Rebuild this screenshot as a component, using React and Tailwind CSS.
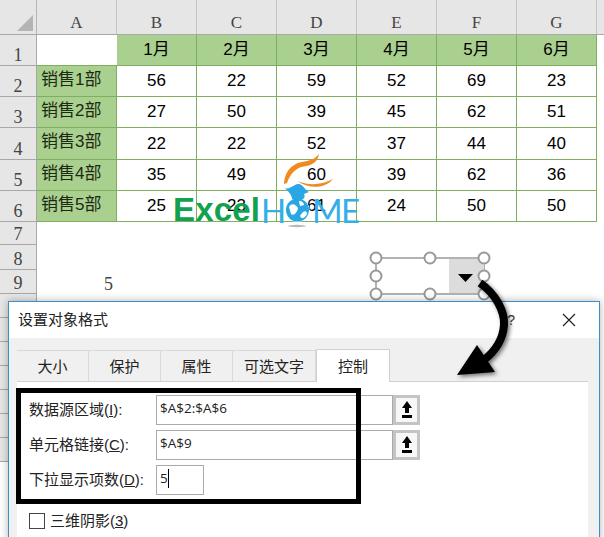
import React from 'react';

const months = ['1月', '2月', '3月', '4月', '5月', '6月'];
const rows = [
  ['销售1部', 56, 22, 59, 52, 69, 23],
  ['销售2部', 27, 50, 39, 45, 62, 51],
  ['销售3部', 22, 22, 52, 37, 44, 40],
  ['销售4部', 35, 49, 60, 39, 62, 36],
  ['销售5部', 25, 23, 61, 24, 50, 50],
];
const colLetters = ['A', 'B', 'C', 'D', 'E', 'F', 'G'];
const heights = ['h-[31px]', 'h-[31px]', 'h-[31px]', 'h-[32px]', 'h-[31px]', 'h-[31px]'];
const cjk = 'font-["Liberation_Sans","Noto_Sans_CJK_SC",sans-serif]';

const RowHead = ({ n, className }) => (
  <div className={`w-[37px] shrink-0 bg-[#e6e6e6] border-r border-b border-[#a8a8a8] flex items-end justify-center pb-[1px] leading-[18px] text-[18px] text-[#444] font-["Liberation_Serif",serif] ${className}`}>
    {n}
  </div>
);

const Cell = ({ children, className = '' }) => (
  <div className={`w-[80px] shrink-0 border-r border-b border-[#7fae5f] flex items-center justify-center text-[17px] text-black ${className}`}>
    {children}
  </div>
);

const EmptyRow = ({ n, h, children }) => (
  <div className={`flex ${h}`}>
    <RowHead n={n} className={h} />
    <div className="w-[80px] shrink-0 flex items-end justify-end pr-[4px] pb-[1px] leading-[18px] text-[18px] text-[#444] font-['Liberation_Serif',serif]">
      {children}
    </div>
  </div>
);

const Sheet = () => (
  <div className={`flex flex-col ${cjk}`}>
    <div className="flex h-[35px] bg-[#e6e6e6] border-b border-[#a8a8a8]">
      <div className="w-[37px] shrink-0 border-r border-[#b5b5b5] relative">
        <div className="absolute right-[3px] bottom-[3px] w-0 h-0 border-l-[16px] border-l-transparent border-b-[16px] border-b-[#b4b4b4]"></div>
      </div>
      {colLetters.map((c) => (
        <div key={c} className="w-[80px] shrink-0 border-r border-[#c4c4c4] flex items-end justify-center pb-[2px] leading-[18px] text-[17px] text-[#444] font-['Liberation_Serif',serif]">
          {c}
        </div>
      ))}
    </div>
    <div className={`flex ${heights[0]}`}>
      <RowHead n={1} className={heights[0]} />
      <div className="w-[80px] shrink-0 border-b border-[#7fae5f]"></div>
      {months.map((m) => (
        <Cell key={m} className="bg-[#a9d08e] text-[#111]">{m}</Cell>
      ))}
    </div>
    {rows.map((row, r) => (
      <div key={row[0]} className={`flex ${heights[r + 1]}`}>
        <RowHead n={r + 2} className={heights[r + 1]} />
        <div className="w-[80px] shrink-0 bg-[#a9d08e] border-r border-b border-[#7fae5f] flex items-center pl-[4px] pb-[3px] text-[17px] text-[#1c2a14]">
          {row[0]}
        </div>
        {row.slice(1).map((v, i) => (
          <Cell key={i}>{v}</Cell>
        ))}
      </div>
    ))}
    <EmptyRow n={7} h="h-[23px]" />
    <EmptyRow n={8} h="h-[25px]" />
    <EmptyRow n={9} h="h-[24px]">5</EmptyRow>
    <EmptyRow h="h-[24px]" />
    <EmptyRow h="h-[24px]" />
    <EmptyRow h="h-[24px]" />
    <EmptyRow h="h-[24px]" />
    <EmptyRow h="h-[24px]" />
    <EmptyRow h="h-[24px]" />
    <EmptyRow h="h-[24px]" />
  </div>
);

const Logo = () => (
  <div className="absolute left-[170px] top-[150px] w-[195px] h-[85px]">
    <span className="absolute left-[3px] top-[41px] leading-[38px] text-[33px] font-bold text-[#12a150] tracking-[0.2px] font-['Liberation_Sans',sans-serif]">Excel</span>
    <span className="absolute left-[91px] top-[41px] leading-[38px] text-[33px] text-[#35aee8] font-['Lato',sans-serif]">H</span>
    <span className="absolute left-[142px] top-[41px] leading-[38px] text-[33px] text-[#35aee8] font-['Lato',sans-serif]">M</span>
    <span className="absolute left-[171px] top-[41px] leading-[38px] text-[33px] text-[#35aee8] font-['Lato',sans-serif]">E</span>
    <svg className="absolute inset-0" width="195" height="85" viewBox="0 0 195 85">
      <path d="M114 34 C114 24 120 14 132 12 C138 11 144 10 149 4 C148 10 144 15 136 16 C126 17 120 24 117 33 Z" fill="#f08a1d" />
      <path d="M127 31 C137 35 150 36 163 29 C155 39 139 39 127 31 Z" fill="#f08a1d" />
      <circle cx="127.5" cy="60" r="12" fill="#ffffff" />
      <circle cx="127.5" cy="60" r="11.5" fill="#29a6e4" />
      <path d="M115 38 C120 40 124 34 128 34 C132 33 135 40 139 42 L134 44 C136 48 133 50 128 50 L122 49 C122 45 118 41 115 38 Z" fill="#29a6e4" />
      <path d="M119 57 C122 52 126 55 128 58 C127 63 124 66 121 64 Z M130 66 C133 60 137 60 137 64 C135 68 132 70 130 66 Z M129 51 C132 51 134 53 134 55 L130 56 Z" fill="#ffffff" />
      <ellipse cx="127" cy="76" rx="9" ry="1.2" fill="#b8b8b8" />
    </svg>
  </div>
);

const ComboHandles = () => (
  <svg className="absolute left-[360px] top-[245px]" width="140" height="62" viewBox="0 0 140 62">
    <rect x="16" y="13" width="108" height="36" fill="#ffffff" stroke="#999999" strokeWidth="1.5" />
    <rect x="89" y="14" width="35" height="34" fill="#dcdcdc" />
    <path d="M98 29 H113 L105.5 37 Z" fill="#000000" />
    {[[16, 13], [70, 13], [124, 13], [16, 31], [124, 31], [16, 49], [70, 49], [124, 49]].map(([cx, cy]) => (
      <circle key={`${cx}-${cy}`} cx={cx} cy={cy} r="5.5" fill="#ffffff" stroke="#999999" strokeWidth="2" />
    ))}
  </svg>
);

const CurvedArrow = () => (
  <svg className="absolute left-[440px] top-[270px] drop-shadow-[2px_2px_2px_rgba(0,0,0,0.55)]" width="90" height="120" viewBox="0 0 90 120">
    <path d="M40 13 C56 24 65 42 64 55 C63 70 54 82 44 90" fill="none" stroke="#000000" strokeWidth="8" />
    <path d="M37 75 L17 105 L55 102 Z" fill="#000000" />
  </svg>
);

const RefButton = () => (
  <div className="w-[27px] h-[30px] border-[3px] border-[#c4c4c4] bg-[#f7f7f7] flex items-center justify-center">
    <svg width="12" height="18" viewBox="0 0 12 18">
      <path d="M6 0 L11 7 H8 V12 H4 V7 H1 Z" fill="#000000" />
      <rect x="1" y="14" width="10" height="3" fill="#000000" />
    </svg>
  </div>
);

const FieldRow = ({ label, hot, value, width, button, caret }) => (
  <div className="flex items-center h-[30px]">
    <label className="w-[127px] shrink-0 text-[15px] text-[#222]">
      {label}(<span className="underline">{hot}</span>):
    </label>
    <div className={`${width} h-[30px] border border-[#aaaaaa] bg-white pl-[3px] pb-[4px] flex items-center text-[13.5px] text-[#222] font-['Open_Sans',sans-serif]`}>
      {value}
      {caret && <span className="w-px h-[19px] bg-black"></span>}
    </div>
    {button && <RefButton />}
  </div>
);

const tabs = ['大小', '保护', '属性', '可选文字'];

const Dialog = () => (
  <div className={`absolute left-[8px] top-[301px] w-[592px] h-[240px] bg-[#f0f0f0] border border-[#3d8ec9] shadow-[0_0_8px_rgba(0,0,0,0.3)] flex flex-col ${cjk}`}>
    <div className="h-[36px] shrink-0 bg-white flex items-center justify-between pl-[9px] pr-[23px]">
      <span className="text-[15px] text-[#222]">设置对象格式</span>
      <div className="flex items-center gap-[47px]">
        <span className="text-[14px] text-[#333]">?</span>
        <svg width="14" height="14" viewBox="0 0 14 14">
          <path d="M1 1 L13 13 M13 1 L1 13" stroke="#222222" strokeWidth="1.2" />
        </svg>
      </div>
    </div>
    <div className="flex-1 flex flex-col pl-[8px] pr-[11px] pt-[12px]">
      <div className="flex h-[31px] shrink-0">
        {tabs.map((t) => (
          <div key={t} className="px-[11px] min-w-[72px] pt-[3px] border-t border-r border-[#d9d9d9] flex items-center justify-center text-[15px] text-[#222]">
            {t}
          </div>
        ))}
        <div className="-mt-[1px] h-[33px] w-[74px] z-10 pt-[3px] bg-white border border-b-0 border-[#d0d0d0] flex items-center justify-center text-[15px] text-[#222]">
          控制
        </div>
      </div>
      <div className="flex-1 bg-white border-t border-[#d0d0d0] pl-[12px] pt-[13px] flex flex-col gap-[5px]">
        <FieldRow label="数据源区域" hot="I" value="$A$2:$A$6" width="w-[237px]" button />
        <FieldRow label="单元格链接" hot="C" value="$A$9" width="w-[237px]" button />
        <FieldRow label="下拉显示项数" hot="D" value="5" width="w-[48px]" caret />
        <div className="flex items-center gap-[5px] mt-[10px] text-[15px] text-[#222]">
          <span className="w-[16px] h-[16px] border border-[#444] bg-white"></span>
          <span>三维阴影(<span className="underline">3</span>)</span>
        </div>
      </div>
    </div>
  </div>
);

export default function App() {
  return (
    <div className="relative w-[604px] h-[537px] overflow-hidden bg-white">
      <Sheet />
      <Logo />
      <ComboHandles />
      <Dialog />
      <div className="absolute left-[16px] top-[388px] w-[345px] h-[116px] border-[5px] border-black"></div>
      <CurvedArrow />
    </div>
  );
}
